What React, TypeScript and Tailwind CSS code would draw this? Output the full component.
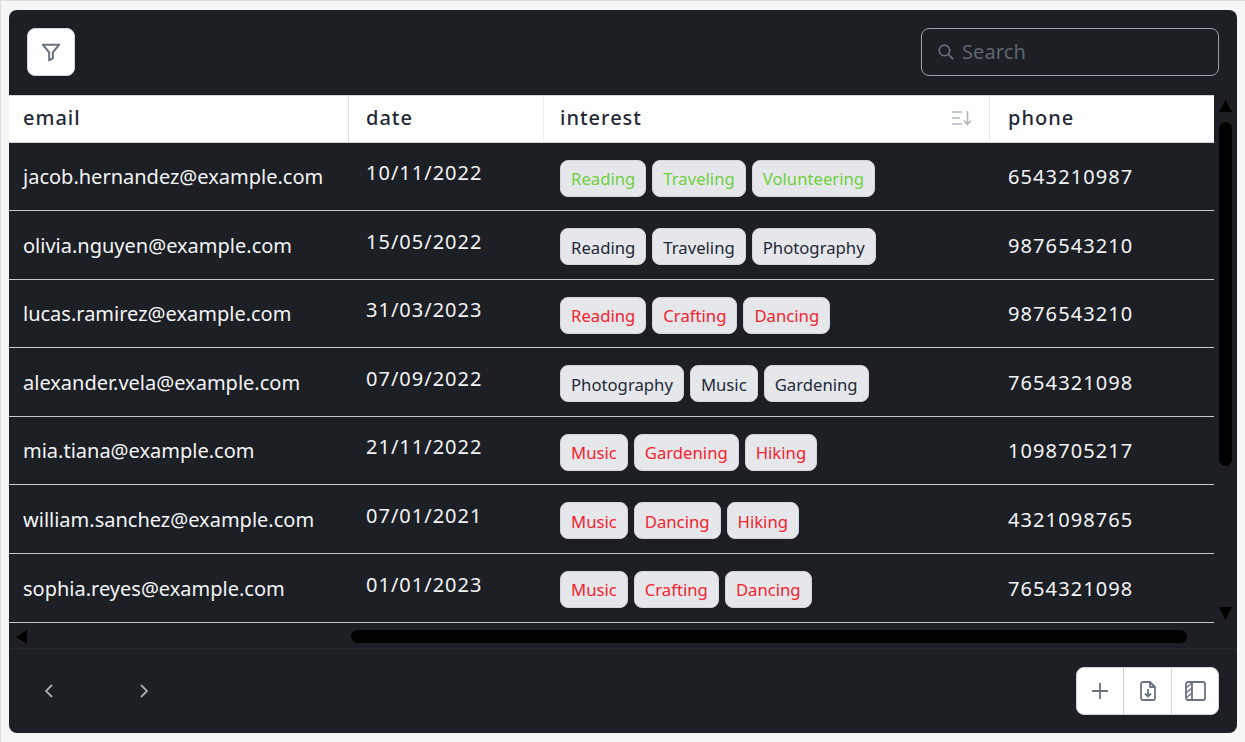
import React from "react";

const font = { fontFamily: '"Noto Sans", sans-serif' };
const rows = [
  ["jacob.hernandez@example.com", "10/11/2022", "text-[#6fcf3f]", ["Reading", "Traveling", "Volunteering"], "6543210987"],
  ["olivia.nguyen@example.com", "15/05/2022", "text-[#1f2937]", ["Reading", "Traveling", "Photography"], "9876543210"],
  ["lucas.ramirez@example.com", "31/03/2023", "text-[#f5222d]", ["Reading", "Crafting", "Dancing"], "9876543210"],
  ["alexander.vela@example.com", "07/09/2022", "text-[#1f2937]", ["Photography", "Music", "Gardening"], "7654321098"],
  ["mia.tiana@example.com", "21/11/2022", "text-[#f5222d]", ["Music", "Gardening", "Hiking"], "1098705217"],
  ["william.sanchez@example.com", "07/01/2021", "text-[#f5222d]", ["Music", "Dancing", "Hiking"], "4321098765"],
  ["sophia.reyes@example.com", "01/01/2023", "text-[#f5222d]", ["Music", "Crafting", "Dancing"], "7654321098"],
] as const;

const grid = "grid grid-cols-[340px_195px_446px_224px]";

function Tri({ d, className }: { d: string; className: string }) {
  return (
    <svg viewBox="0 0 12 12" preserveAspectRatio="none" className={`shrink-0 ${className}`}>
      <path d={d} fill="#000" />
    </svg>
  );
}

export default function App() {
  return (
    <div style={font} className="w-[1245px] h-[742px] bg-[#f6f6f6] border-t border-l border-t-[#dcdcdc] border-l-[#dcdcdc] pl-2 pt-[9px] overflow-hidden">
      <div className="w-[1228px] h-[723px] bg-[#1c1f24] rounded-lg flex flex-col overflow-hidden">
        <div className="h-[85px] shrink-0 flex items-center justify-between pl-[18px] pr-[18px] pb-[1px]">
          <button className="w-12 h-12 bg-white rounded-lg border border-[#d1d5db] flex items-center justify-center">
            <svg width="22" height="22" viewBox="0 0 24 24" fill="none" stroke="#6b7280" strokeWidth="2.200" strokeLinejoin="round" strokeLinecap="round">
              <path d="M3 4h18l-7 8.500V19l-4 2v-8.500z" />
            </svg>
          </button>
          <div className="w-[298px] h-12 rounded-lg border-[1.500px] border-[#9ca3af] flex items-center pl-[15px] gap-2">
            <svg width="17" height="17" viewBox="0 0 24 24" fill="none" stroke="#6b7280" strokeWidth="2.200" strokeLinecap="round" className="-mt-[2px]">
              <circle cx="10.500" cy="10.500" r="7.500" />
              <path d="m16 16 6 6" />
            </svg>
            <span className="text-[20px] text-[#5f6670] leading-none tracking-[0.1px]">Search</span>
          </div>
        </div>
        <div className="flex h-[528px] shrink-0">
          <div className="w-[1205px] shrink-0">
            <div className={`${grid} h-[47.500px] bg-white border-t border-b border-[#d1d5db] text-[#1f2937] text-[20px] font-medium tracking-[1px]`}>
              <div className="flex items-center pl-[14px] pb-[2px] border-r border-[#e0e0e0]">email</div>
              <div className="flex items-center pl-[17px] pb-[2px] border-r border-[#eeeeee]">date</div>
              <div className="flex items-center justify-between pl-[16px] pr-[17px] pb-[2px] border-r border-[#e5e7eb]">
                interest
                <svg width="21" height="18" viewBox="0 0 21 18" fill="none" stroke="#b4bac2" strokeWidth="1.700">
                  <path d="M1 3h10M1 9h8M1 15h10M16.500 2v13M13 11.500l3.500 4 3.500-4" />
                </svg>
              </div>
              <div className="flex items-center pl-[18px] pb-[2px]">phone</div>
            </div>
            {rows.map(([email, date, color, tags, phone]) => (
              <div key={email} className={`${grid} h-[68.500px] last:h-[69px] border-b border-[#c4c7cc] text-[#f3f4f6] text-[20px]`}>
                <div className="flex items-center pl-[14px] pt-[2px] whitespace-nowrap">{email}</div>
                <div className="flex items-center pl-[17px] pb-[6px] tracking-[1px]">{date}</div>
                <div className="flex items-center pl-[16px] gap-[6px] pt-[4px]">
                  {tags.map((t) => (
                    <span key={t} className={`h-[37px] px-[10px] pt-[1px] flex items-center rounded-lg bg-[#e5e7eb] border border-[#d1d5db] text-[16.700px] ${color}`}>{t}</span>
                  ))}
                </div>
                <div className="flex items-center pl-[18px] pt-[2px] tracking-[1.100px]">{phone}</div>
              </div>
            ))}
          </div>
          <div className="w-[23px] flex flex-col items-center pt-[5px]">
            <Tri d="M6 0 12 12H0z" className="w-[13px] h-[12px]" />
            <div className="w-[13px] h-[344px] bg-black rounded-full mt-[10px] shrink-0" />
            <Tri d="M0 0h12L6 12z" className="w-[13px] h-[13px] mt-[141px]" />
          </div>
        </div>
        <div className="h-[26px] shrink-0 border-b border-[#24272c] flex items-center pl-[7px] pt-[2px]">
          <Tri d="M12 0v12L0 6z" className="w-[11px] h-[14px]" />
          <div className="w-[836px] h-[13px] bg-black rounded-full ml-[324px]" />
        </div>
        <div className="flex-1 flex items-center justify-between pl-[32px] pr-[18px]">
          <div className="flex gap-[79px]">
            <svg width="16" height="20" viewBox="0 0 16 20" fill="none" stroke="#a8abb0" strokeWidth="1.800"><path d="M11 4 5 10l6 6" /></svg>
            <svg width="16" height="20" viewBox="0 0 16 20" fill="none" stroke="#a8abb0" strokeWidth="1.800"><path d="m5 4 6 6-6 6" /></svg>
          </div>
          <div className="flex h-12 w-[143px] bg-white rounded-lg border border-[#d1d5db] overflow-hidden">
            <div className="w-[47px] border-r border-[#c9cdd3] flex items-center justify-center">
              <svg width="20" height="20" viewBox="0 0 20 20" fill="none" stroke="#6b7280" strokeWidth="1.800"><path d="M10 2v16M2 10h16" /></svg>
            </div>
            <div className="w-[48px] border-r border-[#d1d5db] flex items-center justify-center">
              <svg width="20" height="22" viewBox="0 0 20 22" fill="none" stroke="#6b7280" strokeWidth="1.800" strokeLinejoin="round">
                <path d="M5 2h7l5 5v11a2 2 0 0 1-2 2H5a2 2 0 0 1-2-2V4a2 2 0 0 1 2-2zM12 2v5h5" />
                <path d="M10 9v7" /><path d="m7 13.500 3 3 3-3" />
              </svg>
            </div>
            <div className="flex-1 flex items-center justify-center">
              <svg width="21" height="20" viewBox="0 0 21 20" fill="none" stroke="#6b7280" strokeWidth="1.800">
                <rect x="1" y="1" width="19" height="18" rx="2" />
                <path d="M7 1v18" />
                <path d="M1 7 7 2M1 12l6-5M1 17l6-5" strokeWidth="1.400" />
              </svg>
            </div>
          </div>
        </div>
      </div>
    </div>
  );
}
